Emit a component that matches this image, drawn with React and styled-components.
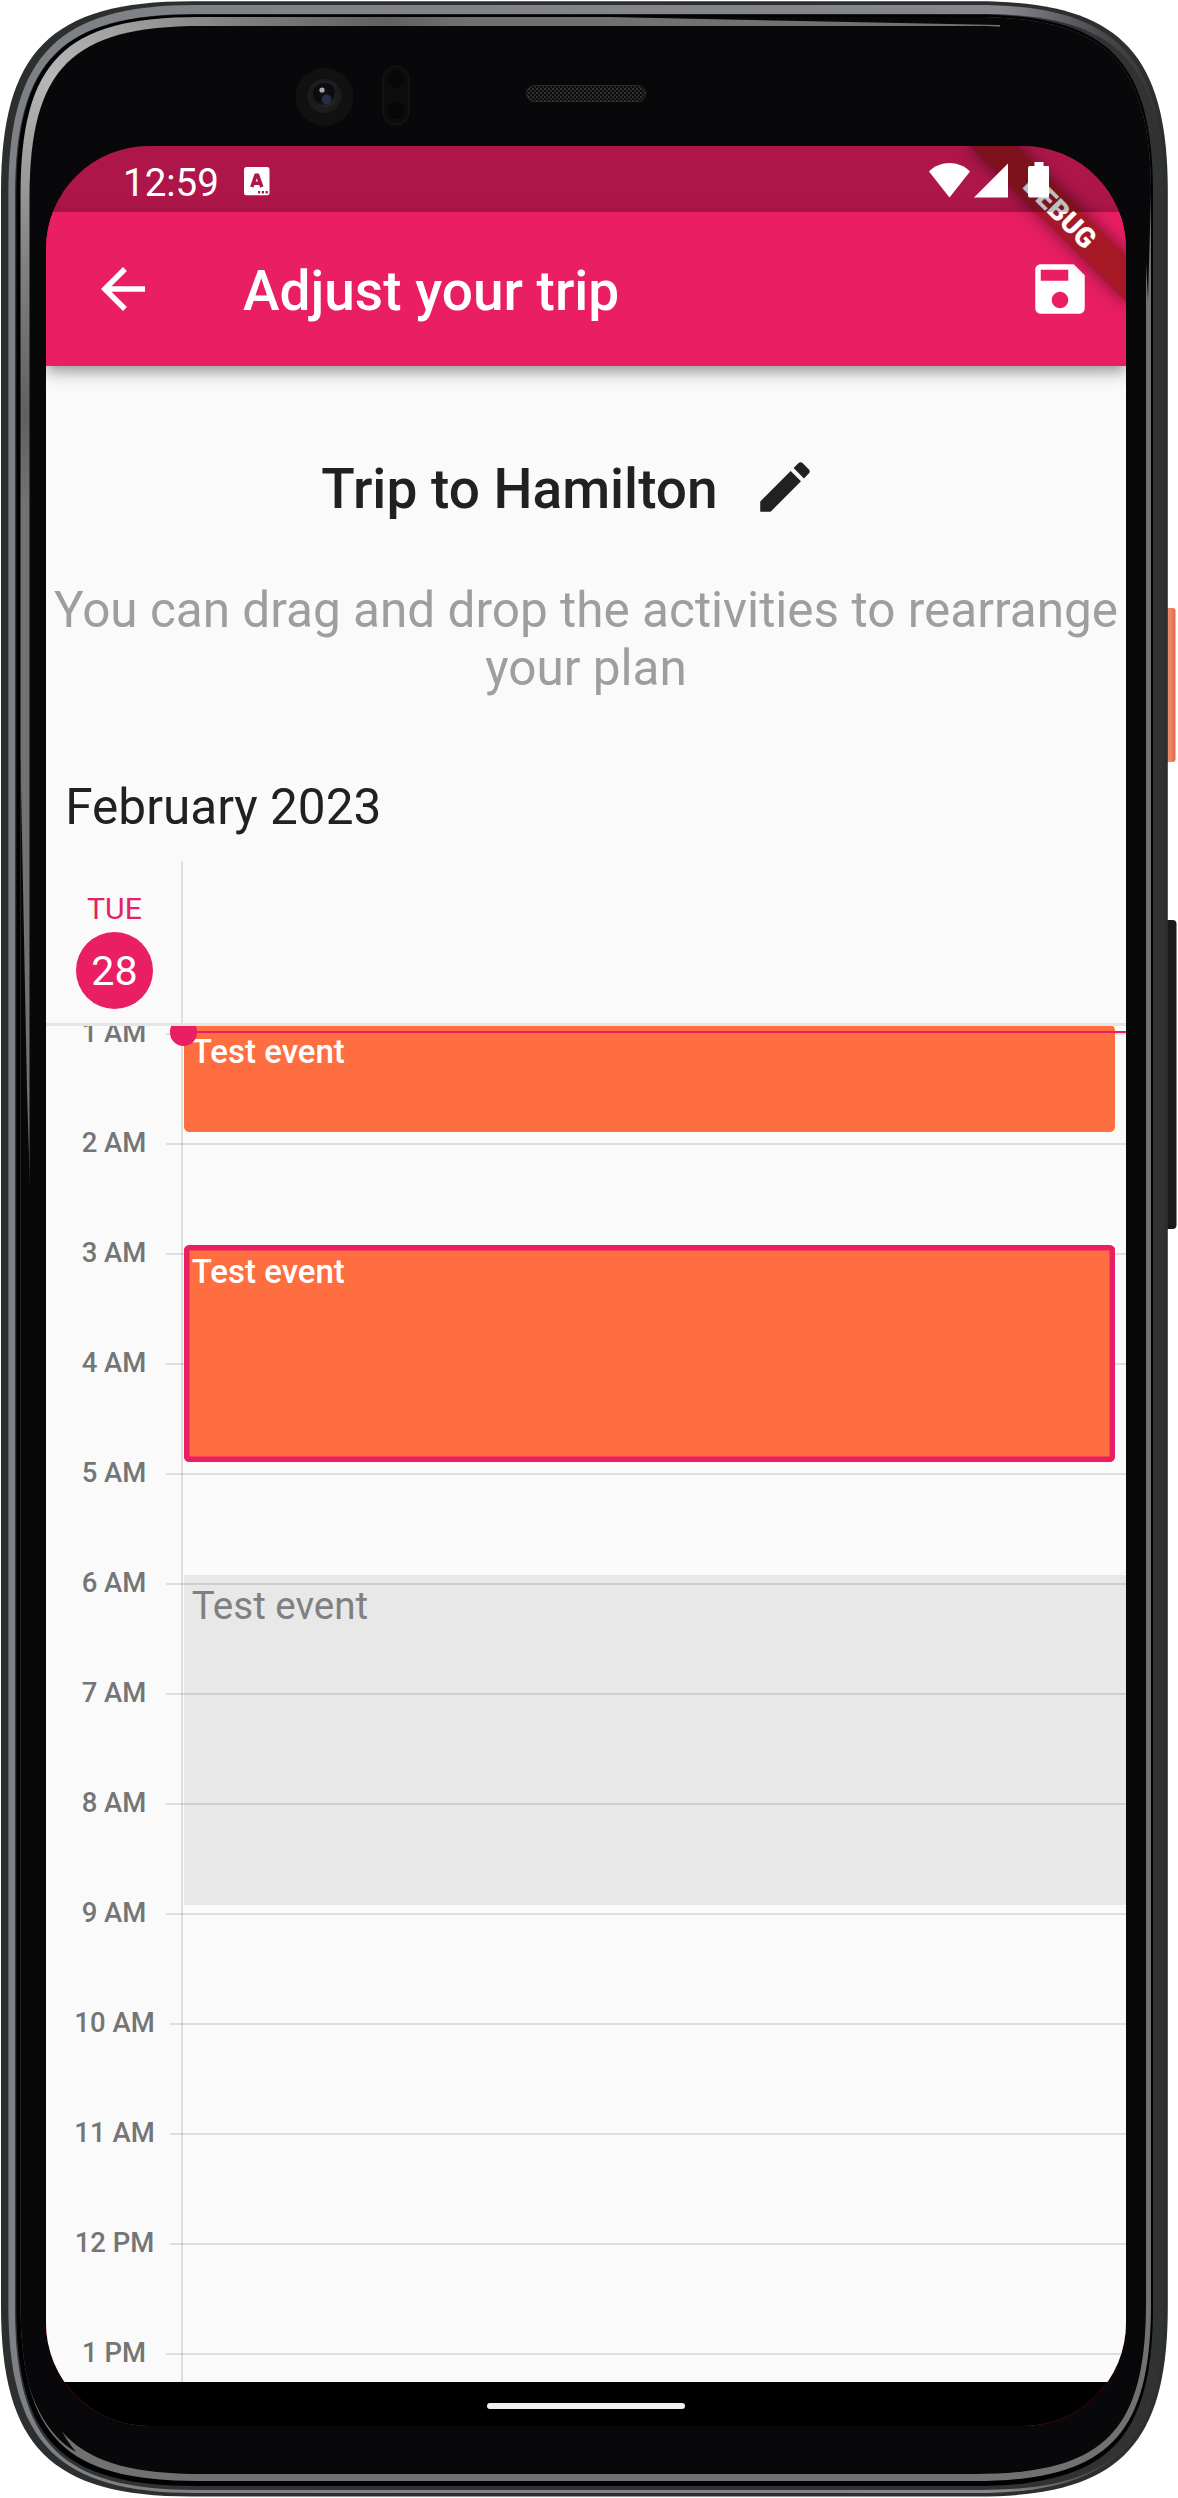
import React from "react";
import styled, { createGlobalStyle } from "styled-components";

const PINK = "#e91e63";
const ORANGE = "#ff6e40";

const GlobalStyle = createGlobalStyle`
  * { box-sizing: border-box; }
  body { margin: 0; background: #fff; font-family: Roboto, sans-serif; }
`;

const Device = styled.div`
  position: relative;
  width: 1178px;
  height: 2498px;
  padding: 146px 52px 72px 46px;
  overflow: hidden;
`;

const Shell = styled.svg`
  position: absolute;
  inset: 0;
`;

const Screen = styled.div`
  position: relative;
  display: flex;
  flex-direction: column;
  width: 1080px;
  height: 2280px;
  border-radius: 103px;
  overflow: hidden;
  background: ${PINK};
`;

const StatusBar = styled.div`
  position: relative;
  z-index: 4;
  flex: none;
  display: flex;
  align-items: center;
  height: 66px;
  padding: 2px 77px 0 77px;
  background: rgba(0, 0, 0, 0.25);
  color: #fff;
`;

const Clock = styled.span`
  width: 120.8px;
  padding-top: 5px;
  font-size: 38.5px;
  line-height: 45px;
`;

const KeyboardBadge = styled.svg`
  margin-top: 2px;
`;

const StatusIcons = styled.svg`
  margin-left: auto;
`;

const AppBar = styled.header`
  position: relative;
  z-index: 2;
  flex: none;
  display: flex;
  align-items: center;
  height: 154px;
  padding: 0 33px 0 44px;
  background: ${PINK};
  color: #fff;
  box-shadow: 0 5px 11px -2px rgba(0, 0, 0, 0.25), 0 9px 14px 0 rgba(0, 0, 0, 0.14),
    0 3px 26px 0 rgba(0, 0, 0, 0.1);
`;

const AppTitle = styled.h1`
  flex: 1;
  margin: 3px 0 0 87px;
  font-size: 55px;
  font-weight: 500;
  line-height: 64px;
`;

const Banner = styled.div`
  position: absolute;
  z-index: 3;
  top: 0;
  left: 1080px;
  width: 0;
  height: 0;
  transform: rotate(45deg);
`;

const BannerRibbon = styled.div`
  display: flex;
  align-items: center;
  justify-content: center;
  width: 220px;
  height: 33px;
  margin: 77px 0 0 -110px;
  background: linear-gradient(rgba(183, 28, 28, 0.63), rgba(183, 28, 28, 0.63)), rgba(0, 0, 0, 0.4);
  box-shadow: 0 0 17px rgba(0, 0, 0, 0.5);
  color: #fff;
  font-size: 28px;
  font-weight: 900;
  line-height: 33px;
`;

const Body = styled.main`
  flex: none;
  display: flex;
  flex-direction: column;
  height: 2016px;
  padding-top: 55px;
  background: #fafafa;
  color: #212121;
`;

const TripRow = styled.div`
  flex: none;
  display: flex;
  align-items: center;
  justify-content: center;
  height: 132px;
`;

const TripName = styled.h2`
  margin: 3px 1px 0 0;
  font-size: 55px;
  font-weight: 500;
  line-height: 64px;
`;

const IconButton = styled.span`
  display: flex;
  align-items: center;
  justify-content: center;
  width: 132px;
  height: 132px;
`;

const Hint = styled.p`
  flex: none;
  margin: 28px 0 0;
  color: #9e9e9e;
  font-size: 49.5px;
  line-height: 58px;
  text-align: center;
`;

const Month = styled.div`
  flex: none;
  height: 83px;
  margin-top: 81px;
  padding-left: 19.25px;
  font-size: 49.5px;
  line-height: 58px;
`;

const DayHeader = styled.div`
  flex: none;
  display: flex;
  height: 165px;
  border-bottom: 3px solid #e5e5e5;
`;

const DayCell = styled.div`
  display: flex;
  flex-direction: column;
  align-items: center;
  width: 137px;
  padding: 30px 0 0 2px;
  border-right: 2px solid #dfdfdf;
`;

const Weekday = styled.span`
  color: ${PINK};
  font-size: 30.25px;
  line-height: 36px;
`;

const DayNumber = styled.span`
  display: flex;
  align-items: center;
  justify-content: center;
  width: 77px;
  height: 77px;
  margin-top: 5px;
  border-radius: 50%;
  background: ${PINK};
  color: #fff;
  font-size: 41.25px;
`;

const Timeline = styled.div`
  position: relative;
  flex: 1;
  min-height: 0;
  overflow: hidden;
`;

const Hours = styled.div`
  position: relative;
  display: flex;
  flex-direction: column;
  margin-top: -47px;
`;

const HourRow = styled.div`
  flex: none;
  display: flex;
  align-items: center;
  height: 110px;
`;

const HourLabel = styled.span`
  width: ${(p) => (p.$wide ? 124 : 120)}px;
  padding-left: ${(p) => (p.$wide ? 13 : 16)}px;
  margin-top: -3px;
  color: #757575;
  font-size: 27.5px;
  font-weight: 500;
  line-height: 32px;
  text-align: center;
  white-space: nowrap;
`;

const HourLine = styled.span`
  flex: 1;
  height: 2px;
  background: rgba(0, 0, 0, 0.11);
`;

const Gutter = styled.div`
  position: absolute;
  top: 0;
  bottom: 0;
  left: 135px;
  width: 2px;
  background: rgba(0, 0, 0, 0.11);
`;

const EventCard = styled.div`
  position: absolute;
  top: ${(p) => p.$top}px;
  left: 137.5px;
  width: 931.5px;
  height: ${(p) => p.$height}px;
  padding: 7px 8.25px;
  border-radius: 5.5px;
  background: ${ORANGE};
  box-shadow: ${(p) => (p.$selected ? `inset 0 0 0 5.5px ${PINK}` : "none")};
  color: #fff;
  font-size: 33px;
  font-weight: 500;
  line-height: 39px;
`;

const BusyBlock = styled.div`
  position: absolute;
  top: 549px;
  left: 137.5px;
  right: 0;
  height: 329.7px;
  padding: 8px 8.25px;
  background: rgba(0, 0, 0, 0.072);
  color: #808080;
  font-size: 38.5px;
  line-height: 45px;
`;

const NowLine = styled.div`
  position: absolute;
  top: 4.6px;
  left: 137.5px;
  right: 0;
  height: 2.75px;
  background: ${PINK};

  &::before {
    content: "";
    position: absolute;
    top: -12.4px;
    left: -13.75px;
    width: 27.5px;
    height: 27.5px;
    border-radius: 50%;
    background: ${PINK};
  }
`;

const NavBar = styled.div`
  flex: none;
  display: flex;
  justify-content: center;
  height: 44px;
  padding-top: 21px;
  background: #000;
`;

const NavPill = styled.span`
  width: 198px;
  height: 6px;
  border-radius: 3px;
  background: #f1f1f1;
`;

// Rounded outline whose corners ease in over a longer run than a plain arc.
const outline = (l, t, r, b, run, pull) =>
  `M${l} ${t + run} C${l} ${t + pull} ${l + pull} ${t} ${l + run} ${t} H${r - run} ` +
  `C${r - pull} ${t} ${r} ${t + pull} ${r} ${t + run} V${b - run} ` +
  `C${r} ${b - pull} ${r - pull} ${b} ${r - run} ${b} H${l + run} ` +
  `C${l + pull} ${b} ${l} ${b - pull} ${l} ${b - run} Z`;

const BEVEL = outline(20.5, 17, 1151, 2481, 178, 44);

const DeviceShell = () => (
  <Shell width="1178" height="2498" viewBox="0 0 1178 2498">
    <defs>
      <linearGradient id="metal" x1="0" x2="1" y1="0" y2="0">
        <stop offset="0" stopColor="#7d8085" />
        <stop offset="0.86" stopColor="#85878d" />
        <stop offset="0.95" stopColor="#45474a" />
        <stop offset="1" stopColor="#2f3133" />
      </linearGradient>
      <radialGradient id="bevel" gradientUnits="userSpaceOnUse" cx="55" cy="80" r="420">
        <stop offset="0" stopColor="#b8b8b8" />
        <stop offset="0.45" stopColor="#808080" />
        <stop offset="0.8" stopColor="#606060" />
        <stop offset="1" stopColor="#717171" />
      </radialGradient>
      <linearGradient id="power" x1="0" x2="1" y1="0" y2="0">
        <stop offset="0" stopColor="#d9613f" />
        <stop offset="0.5" stopColor="#f08d6e" />
        <stop offset="1" stopColor="#e2694a" />
      </linearGradient>
      <radialGradient id="lens" cx="0.45" cy="0.4" r="0.6">
        <stop offset="0" stopColor="#101014" />
        <stop offset="0.7" stopColor="#0b0b0e" />
        <stop offset="1" stopColor="#2a2a2c" />
      </radialGradient>
      <pattern id="mesh" width="4" height="4" patternUnits="userSpaceOnUse">
        <rect width="4" height="4" fill="#0c0c0c" />
        <rect width="2" height="2" fill="#323232" />
        <rect x="2" y="2" width="2" height="2" fill="#272727" />
      </pattern>
      <clipPath id="bevelClip">
        <path d={BEVEL} />
      </clipPath>
    </defs>
    <rect x="1162" y="608" width="13.5" height="154" rx="3" fill="url(#power)" />
    <rect x="1162" y="920" width="14.5" height="309" rx="4" fill="#1a1a1a" />
    <path d={outline(1, 1.3, 1167.8, 2496.5, 190, 50)} fill="#2d2f2f" />
    <path d={outline(8.4, 5, 1164, 2493, 187, 50)} fill="url(#metal)" />
    <path d={outline(15, 14, 1162, 2490, 182, 46)} fill="#303234" />
    <path d={outline(16.3, 14.5, 1153, 2486, 180, 45)} fill="#020203" />
    <path d={BEVEL} fill="url(#bevel)" />
    <path d={outline(29.5, 26, 1146, 2474, 172, 42)} fill="#08080a" />
    <g clipPath="url(#bevelClip)" fill="#08080a">
      <path d="M560 16 L1000 25 V60 L1100 110 L1140 150 L1148 300 L1153 120 V14 H560 Z" />
      <path d="M17 760 L20.5 760 L27 1090 L31 1220 V2300 C33 2370 50 2420 76 2452 C40 2432 18 2380 17 2300 Z" />
    </g>
    <circle cx="324.5" cy="97" r="29" fill="#111112" />
    <circle cx="324.5" cy="96" r="17" fill="#1c1c1d" />
    <circle cx="324.5" cy="95" r="12" fill="url(#lens)" />
    <circle cx="326.5" cy="99.5" r="5" fill="#252d47" />
    <circle cx="322" cy="90" r="2.6" fill="#a9a9ad" />
    <rect x="383" y="66.5" width="26" height="58" rx="13" fill="#0c0c0d" stroke="#141415" strokeWidth="1.5" />
    <circle cx="396" cy="79" r="9.5" fill="#070708" stroke="#101011" />
    <circle cx="396" cy="110" r="9.5" fill="#070708" stroke="#101011" />
    <rect x="526.5" y="85.5" width="119" height="16" rx="8" fill="url(#mesh)" stroke="#2c2c2c" />
  </Shell>
);

const MaterialIcon = ({ d }) => (
  <svg width="66" height="66" viewBox="0 0 24 24" fill="currentColor">
    <path d={d} />
  </svg>
);

const ICONS = {
  back: "M20 11H7.83l5.59-5.59L12 4l-8 8 8 8 1.41-1.41L7.83 13H20v-2z",
  save: "M17 3H5c-1.11 0-2 .9-2 2v14c0 1.1.89 2 2 2h14c1.1 0 2-.9 2-2V7l-4-4zm-5 16c-1.66 0-3-1.34-3-3s1.34-3 3-3 3 1.34 3 3-1.34 3-3 3zm3-10H5V5h10v4z",
  edit: "M3 17.25V21h3.75L17.81 9.94l-3.75-3.75L3 17.25zM20.71 7.04c.39-.39.39-1.02 0-1.41l-2.34-2.34c-.39-.39-1.02-.39-1.41 0l-1.83 1.83 3.75 3.75 1.83-1.83z",
};

const HOURS = [
  "1 AM", "2 AM", "3 AM", "4 AM", "5 AM", "6 AM", "7 AM",
  "8 AM", "9 AM", "10 AM", "11 AM", "12 PM", "1 PM",
];

export default function App() {
  return (
    <>
      <GlobalStyle />
      <Device>
        <DeviceShell />
        <Screen>
          <StatusBar>
            <Clock>12:59</Clock>
            <KeyboardBadge width="26" height="29" viewBox="0 0 26 29">
              <rect width="25.5" height="28.3" rx="2.5" fill="#fff" />
              <path
                d="M7.8 20 L12 8.2 H13.6 L17.8 20 M9.6 16.3 H16"
                fill="none"
                stroke="#af164a"
                strokeWidth="3.6"
              />
              <path d="M14 24h2.2v2.4h-2.2zM17.8 24h2.2v2.4h-2.2zM21.6 24h2.2v2.4h-2.2z" fill="#af164a" />
            </KeyboardBadge>
            <StatusIcons width="120" height="36" viewBox="0 0 120 36" fill="#fff">
              <path d="M0 9.5 C11 -2 30 -2 41 9.5 L20.5 35.5 Z" />
              <path d="M79 1.5 V35.5 H45 Z" />
              <path d="M105.5 0h9v4h4.3a2 2 0 0 1 2 2v27.5a2 2 0 0 1-2 2H101a2 2 0 0 1-2-2V6a2 2 0 0 1 2-2h4.5z" />
            </StatusIcons>
          </StatusBar>
          <AppBar>
            <MaterialIcon d={ICONS.back} />
            <AppTitle>Adjust your trip</AppTitle>
            <MaterialIcon d={ICONS.save} />
          </AppBar>
          <Banner>
            <BannerRibbon>DEBUG</BannerRibbon>
          </Banner>
          <Body>
            <TripRow>
              <TripName>Trip to Hamilton</TripName>
              <IconButton>
                <MaterialIcon d={ICONS.edit} />
              </IconButton>
            </TripRow>
            <Hint>You can drag and drop the activities to rearrange your plan</Hint>
            <Month>February 2023</Month>
            <DayHeader>
              <DayCell>
                <Weekday>TUE</Weekday>
                <DayNumber>28</DayNumber>
              </DayCell>
            </DayHeader>
            <Timeline>
              <BusyBlock>Test event</BusyBlock>
              <Hours>
                {HOURS.map((hour) => (
                  <HourRow key={hour}>
                    <HourLabel $wide={hour.length > 4}>{hour}</HourLabel>
                    <HourLine />
                  </HourRow>
                ))}
              </Hours>
              <Gutter />
              <EventCard $top={-1} $height={107}>Test event</EventCard>
              <EventCard $top={218.5} $height={217.5} $selected>Test event</EventCard>
              <NowLine />
            </Timeline>
          </Body>
          <NavBar>
            <NavPill />
          </NavBar>
        </Screen>
      </Device>
    </>
  );
}
